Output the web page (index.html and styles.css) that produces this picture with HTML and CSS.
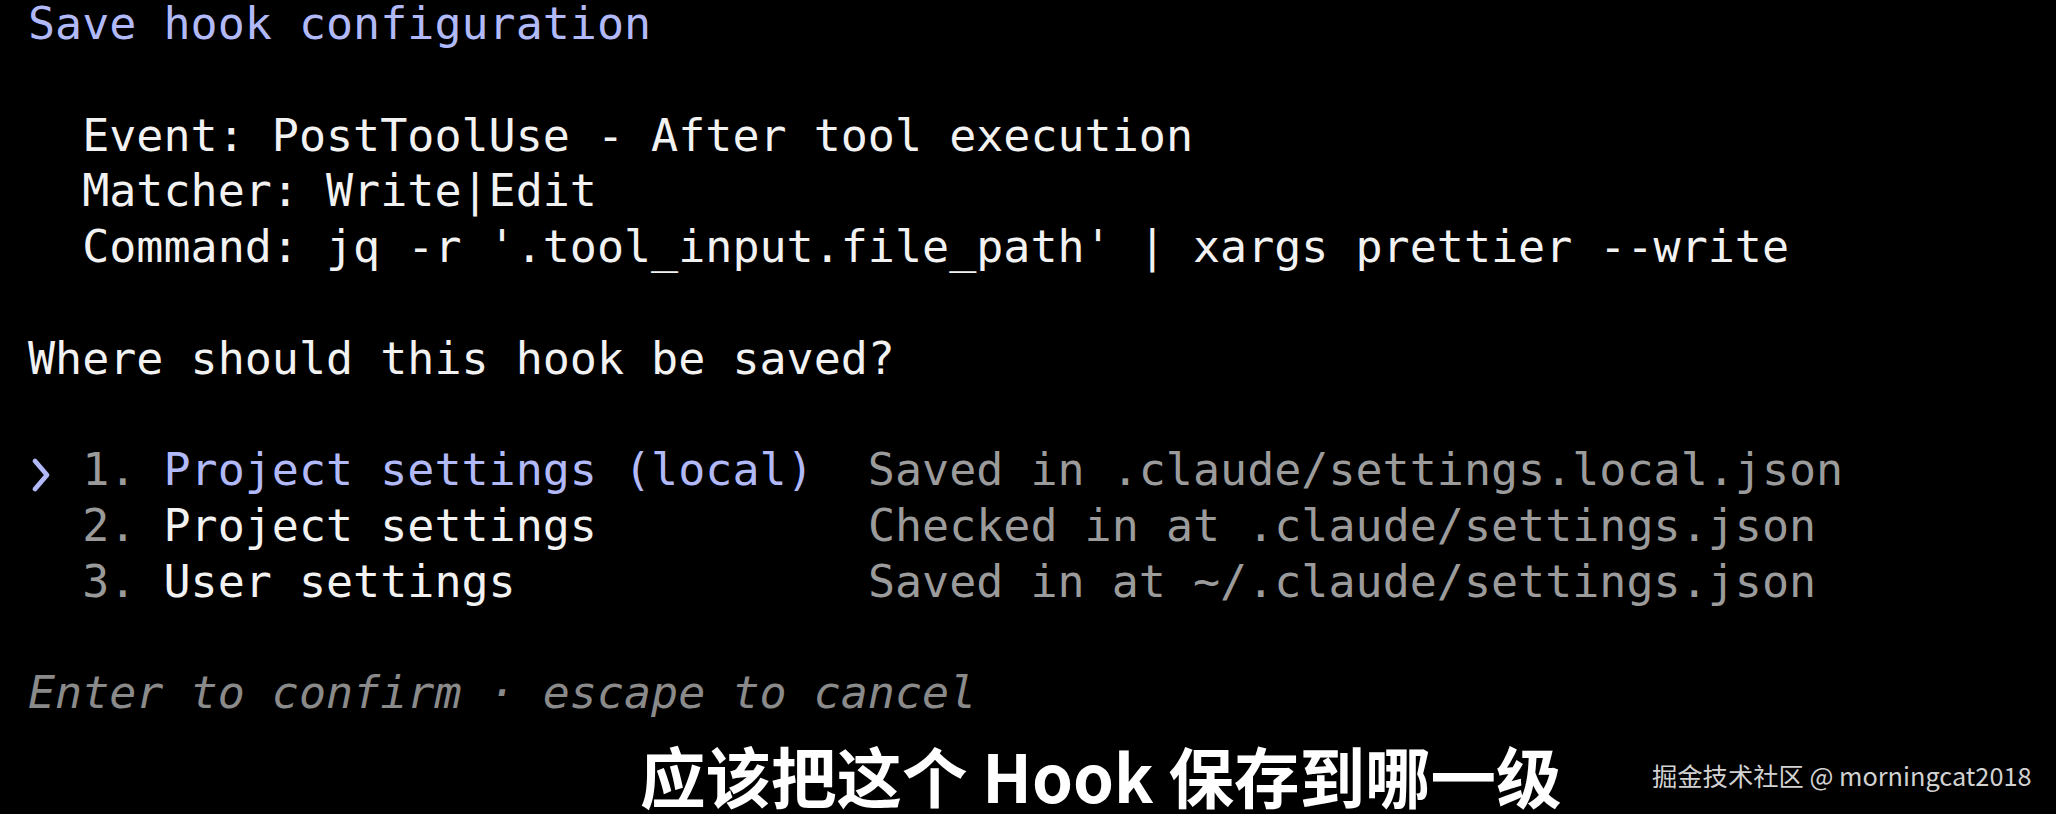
FILE: index.html
```html
<!DOCTYPE html>
<html lang="en">
<head>
<meta charset="utf-8">
<title>Save hook configuration</title>
<link rel="stylesheet" href="styles.css">
</head>
<body>
<main class="screen">
  <section class="term">
    <div class="line accent">Save hook configuration</div>
    <div class="line"> </div>
    <div class="line">  Event: PostToolUse - After tool execution</div>
    <div class="line">  Matcher: Write|Edit</div>
    <div class="line">  Command: jq -r '.tool_input.file_path' | xargs prettier --write</div>
    <div class="line"> </div>
    <div class="line">Where should this hook be saved?</div>
    <div class="line"> </div>
    <div class="line"><span class="ptr"><svg viewBox="0 0 27 56" width="27" height="56" aria-hidden="true"><polyline points="7,19 19,33 7,47" fill="none" stroke="#b1b9f9" stroke-width="4.8" stroke-linecap="round" stroke-linejoin="round"/></svg></span> <span class="num">1.</span> <span class="accent">Project settings (local)</span>  <span class="desc">Saved in .claude/settings.local.json</span></div>
    <div class="line">  <span class="num">2.</span> Project settings          <span class="desc">Checked in at .claude/settings.json</span></div>
    <div class="line">  <span class="num">3.</span> User settings             <span class="desc">Saved in at ~/.claude/settings.json</span></div>
    <div class="line"> </div>
    <div class="line hint">Enter to confirm · escape to cancel</div>
  </section>
  <div class="caption">应该把这个 Hook 保存到哪一级</div>
  <div class="watermark">掘金技术社区 @ morningcat2018</div>
</main>
</body>
</html>
```

FILE: styles.css
```css
html, body {
  margin: 0;
  padding: 0;
  background: #000;
}

.screen {
  position: relative;
  width: 2056px;
  height: 814px;
  overflow: hidden;
  background: #000;
}

.term {
  padding-top: 0;
  margin-top: -4px;
  padding-left: 28px;
  font-family: "DejaVu Sans Mono", "Liberation Mono", monospace;
  font-size: 45px;
  line-height: 55.75px;
  color: #f2f2f2;
}

.line {
  white-space: pre;
  height: 55.75px;
}

.accent {
  color: #b1b9f9;
}

.num {
  color: #9a9a9a;
}

.desc {
  color: #9b9b9b;
}

.hint {
  color: #8a8a8a;
  font-style: italic;
}

.ptr {
  display: inline-block;
  width: 1ch;
  height: 55.75px;
  vertical-align: top;
}

.ptr svg {
  display: block;
}

.caption {
  position: absolute;
  left: 640px;
  top: 739px;
  font-family: "Noto Sans CJK SC", "Noto Sans", sans-serif;
  font-weight: 700;
  font-size: 65.5px;
  line-height: 72px;
  color: #ffffff;
  white-space: nowrap;
}

.watermark {
  position: absolute;
  left: 1652px;
  top: 757px;
  font-family: "Noto Sans CJK SC", "Noto Sans", sans-serif;
  font-size: 25.3px;
  line-height: 36px;
  color: #d2d2d2;
  white-space: nowrap;
}
```
